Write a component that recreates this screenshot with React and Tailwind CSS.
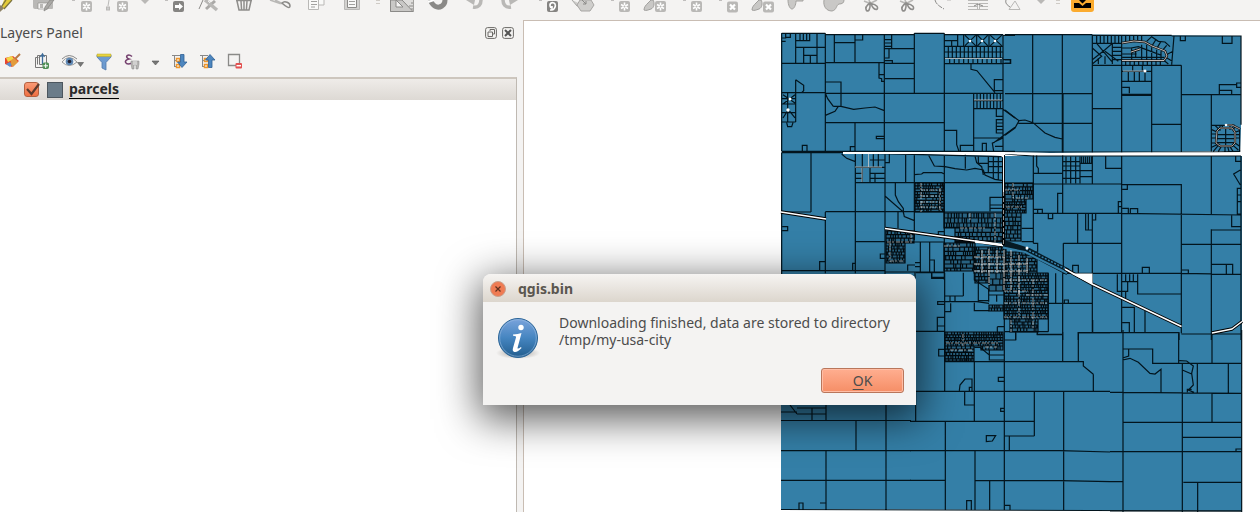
import React from "react";

/* ---------- main toolbar ---------- */

const GREY = "#b9b8b6";
const DARK = "#8b8a88";

function Star({ x = 19 }) {
  return (
    <g>
      <rect x={x} y="1" width="11" height="11" rx="2" fill={GREY} />
      <path d={`M${x + 5.5} 2.5v8M${x + 2} 4.5l7 4M${x + 9} 4.5l-7 4`} stroke="#fff" strokeWidth="1.6" />
      <circle cx={x + 5.5} cy="6.5" r="1" fill={GREY} />
    </g>
  );
}

function Cross() {
  return (
    <g>
      <rect x="19" y="1.5" width="11" height="11" rx="2" fill={GREY} />
      <path d="M22 4.500l5 5M27 4.500l-5 5" stroke="#fff" strokeWidth="2.2" />
    </g>
  );
}

const Leaf = () => <path d="M17 0c2 3 1 8-2 9-3 1-5 2-7 1 0-3 2-5 4-7l3-3z" fill="#c9c8c6" stroke="#a09f9d" />;

const Snips = () => (
  <g fill="none" stroke="#8f8e8c" strokeWidth="1.6">
    <path d="M12 1l6 2.500M19 3l6-3M18 3l-1-3" stroke={GREY} />
    <path d="M18 3c-3 2-5 5-3.500 7.500 2 1.500 4-1 3.500-7.500zM19 3.500c1 3 3 6 5.500 6 2.500-1.500.5-5-5.500-6z" />
  </g>
);

const groups = {
  edit: [
    ["Toggle editing", <g><path d="M12 0h8l-7 8-5 3z" fill="#e3cb38" /><path d="M14 0l-6 9M20 0l-8 9" stroke="#7d7440" strokeWidth="1.300" /><path d="M8 5v7l4-4z" fill="#8c816a" /></g>],
    ["Save layer edits", <g><path d="M5 0h20v8q0 1-1 1H7q-2 0-2-2z" fill={GREY} /><path d="M10 3h10v6H10z" fill="#f4f3f2" stroke={DARK} strokeWidth=".6" /><path d="M12 4h3v4h-3z" fill={GREY} /><path d="M26 0l-7 9-3 2 1-4 5-7z" fill="#a9a8a5" stroke={DARK} strokeWidth=".8" /></g>],
    ["Add feature", <g><Star x={17} /><path d="M8 0h3" stroke={DARK} /></g>],
    ["Add circular string", <g><path d="M9 0l-1 6" stroke={GREY} /><rect x="6.500" y="7" width="3" height="3" fill="#ccc" stroke={GREY} /><Star x={17} /></g>],
  ],
  feature: [
    ["Move feature", <g><path d="M11 0h3" stroke={DARK} /><rect x="19" y="1" width="11" height="11" rx="2" fill="#858482" /><path d="M21 5h4V3l4 3.500-4 3.500V8h-4z" fill="#fff" /></g>],
    ["Node tool", <g><path d="M9 9l4-9" stroke={DARK} /><path d="M16 9L25 1" stroke="#aaa9a7" strokeWidth="3" /><path d="M15 0l12 10" stroke={GREY} strokeWidth="3.500" /><path d="M18 1l2 2" stroke="#eee" /></g>],
    ["Delete selected", <path d="M10 .5h16M11 1l2 9h10l2-9M15 1l.6 9M18 1v9M21 1l-.6 9" fill="none" stroke="#8f8e8c" strokeWidth="1.500" />],
    ["Cut features", <g fill="none" stroke={DARK}><path d="M8 0l10 3.500h3M13 0l6 3" stroke={GREY} strokeWidth="1.600" /><path d="M20 3c3-3 8 0 8 3s-4 1-8-3z" strokeWidth="1.500" /></g>],
    ["Copy features", <g fill="#f9f9f8" stroke={GREY}><path d="M15 0v5h11V0" /><path d="M10.500 0v9.500h10V0" /><path d="M13 1.500h6M13 4.500h6M13 7h4" stroke={DARK} strokeWidth=".8" /></g>],
    ["Paste features", <g fill="#f9f9f8" stroke={GREY}><path d="M10.500 0v9.500h15V0" fill="#d2d1cf" /><path d="M13.500 0v7.500h9V0" stroke={DARK} /><path d="M15 1.500h6M15 4.500h6" stroke={DARK} strokeWidth=".8" /></g>],
  ],
  advanced: [
    ["CAD tools", <g><path d="M6.500 0v11.500h23V0" fill="#dedddb" stroke="#a3a29f" /><path d="M6.500 0v11.500H29L18 0z" fill="#c9c8c6" stroke={DARK} /><path d="M12 0v7h7l-7-7z" fill="#f4f3f2" stroke={DARK} /><path d="M27 3h2M25 6h4M27 9h2" stroke={DARK} /></g>],
    ["Snapping", <g><path d="M10 0c3 6 7 9 12 6 3-2 3-4 3-6" fill="none" stroke="#8a8987" strokeWidth="5" /><path d="M8 2l6-2" stroke="#fff" strokeWidth="2" /></g>],
    ["Undo", <g><path d="M17 7c6 1 8-3 8-7" fill="none" stroke={GREY} strokeWidth="3.500" /><path d="M10 0h9l-1 5z" fill={GREY} /></g>],
    ["Redo", <g><path d="M19 7c-6 1-8-3-8-7" fill="none" stroke={GREY} strokeWidth="3.500" /><path d="M26 0h-9l1 5z" fill={GREY} /></g>],
    ["Rotate feature", <g><path d="M11 0h3" stroke={DARK} /><rect x="19" y="1" width="11" height="11" rx="2" fill="#858482" /><path d="M23 8c-3-5 2-7 4-4 1 2 0 4-2 6M24 6v4h-2" fill="none" stroke="#fff" strokeWidth="1.600" /></g>],
    ["Simplify feature", <g fill="#cfcecc" stroke="#a7a6a4"><path d="M8 0l5 6h8" /><path d="M16 0l-3 5 4 6h9l4-6-3-5z" /><path d="M18 0l4 4m0-3v3h-3" stroke={DARK} fill="none" /></g>],
    ["Add ring", <g><path d="M11 0h3" stroke={DARK} /><Star /></g>],
    ["Add part", <g><Leaf /><Star /></g>],
    ["Fill ring", <g><path d="M11 0h3" stroke={DARK} /><Star /></g>],
    ["Delete ring", <g><path d="M11 0h3" stroke={DARK} /><Cross /></g>],
    ["Delete part", <g><Leaf /><Cross /></g>],
    ["Reshape features", <path d="M8 0c0 5 2 9 4 9s4-4 4-8h4l3 0V0" fill="#c9c8c6" stroke="#a3a29f" />],
    ["Offset curve", <path d="M8 0c-1 6 2 11 8 11 5-1 4-6 7-7 3 0 5-1 5-4" fill="#c9c8c6" stroke="#a3a29f" />],
    ["Split features", <Snips />],
    ["Split parts", <Snips />],
    ["Merge features", <g fill="none" stroke={DARK}><path d="M11 0c1 4 4 6 9 9" strokeDasharray="5 1" /><path d="M23 0h4" stroke={GREY} /></g>],
    ["Merge attributes", <g fill="none" stroke={GREY}><path d="M8 .5h20M8 3.500h9M19 3.500h9M8 6.500h9M19 6.500h9M8 9.500h20M17.500 3v7M19.500 3v7" /><path d="M14 6l4-2 5 2" stroke={DARK} /></g>],
    ["Rotate point symbols", <g fill="none" stroke={GREY}><path d="M10 0c-1 3 1 5 4 7" stroke={DARK} /><path d="M19 1l-6 8.500h11z" /></g>],
  ],
};

function Tools({ items }) {
  return items.map(([label, art]) => (
    <button key={label} type="button" aria-label={label} className="w-9 shrink-0">
      <svg viewBox="0 0 36 20" className="block h-5 w-9">{art}</svg>
    </button>
  ));
}

const MoreButton = ({ label }) => (
  <button type="button" aria-label={label} className="w-[18px] shrink-0">
    <svg viewBox="0 0 18 20" className="block h-5 w-full"><path d="M5 0h8l-4 4z" fill={GREY} /></svg>
  </button>
);

const Grip = () => (
  <svg viewBox="0 0 14 20" className="block h-5 w-3.5 shrink-0"><path d="M6 .5h4M6 3.500h4" stroke="#cfcbc6" /></svg>
);

function Toolbar() {
  return (
    <header className="-ml-2 flex h-5 shrink-0 overflow-hidden">
      <Tools items={groups.edit} />
      <MoreButton label="More digitizing tools" />
      <Tools items={groups.feature} />
      <Grip />
      <Tools items={groups.advanced} />
      <MoreButton label="More advanced tools" />
      <Grip />
      <button type="button" aria-label="Download data" className="w-9 shrink-0">
        <svg viewBox="0 0 36 20" className="block h-5 w-9">
          <path d="M7 0h23v9q0 3-3 3H10q-3 0-3-3z" fill="#fbab2f" />
          <path d="M10 3h5l3.500 3L22 3h5v5H10zM15 0h7l-3.500 3.500z" fill="#000" />
        </svg>
      </button>
    </header>
  );
}

/* ---------- layers panel ---------- */

const panelTools = [
  ["Style", "w-[34px]", <g><path d="M5 6l8-2 6 5-7 6-7-3z" fill="#e8462f" /><path d="M6 6l6-2 2 3-6 3z" fill="#f2d648" /><path d="M6 12l4-2 2 3-2 2z" fill="#5a8fd0" /><path d="M11 8l4-2 3 4-5 5q-3-3-2-7z" fill="#e39b3c" /><path d="M15 7l5-5" stroke="#b97a45" strokeWidth="2" /></g>],
  ["Add group", "w-[26px]", <g fill="none" stroke="#777"><path d="M4.500 5.500h-3v10h9M8 3.500H3.500v9" /><path d="M5.500 3.500h7v9h-7z" fill="#f4f3f2" /><path d="M8.500 12V3m-2 2l2-3 2 3" stroke="#3c6b99" strokeWidth="1.300" /><rect x="9" y="11" width="5.500" height="5.500" rx="1" fill="#4f8f55" stroke="#4f8f55" /><path d="M11.700 11.500v4.500m-2.200-2.200h4.500" stroke="#fff" /></g>],
  ["Visibility", "w-[35px]", <g><path d="M2 10q7-9 15 0-8 7-15 0z" fill="#f7f7f7" stroke="#999" /><circle cx="9.500" cy="9.500" r="3.800" fill="#5f88b4" /><circle cx="9.500" cy="9.500" r="1.800" fill="#223" /><path d="M2 7q7-7 15 0" fill="none" stroke="#888" /><path d="M17.500 10.500h6L20.500 14.500z" fill="#777" stroke="#555" strokeWidth=".6" /></g>],
  ["Filter", "w-[28px]", <g><path d="M2 3h14v2l-5 5.500V18l-4-2v-5.500L2 5z" fill="#6d9bd0" stroke="#5079ab" strokeWidth=".8" /><path d="M2 2h14v2.500H2z" fill="#e8d43f" stroke="#b8a528" strokeWidth=".5" /></g>],
  ["Filter by expression", "w-[24px]", <g><path d="M9 4.500C5 1 1 5 6 7c-6 1-4 7 3 4" fill="none" stroke="#75416f" strokeWidth="1.600" /><path d="M8 9h8v3l-1 5h-2v-4h-2v4H9l-1-5z" fill="#b5b4b2" stroke="#888" strokeWidth=".5" /><path d="M11 9v4M13 9v4" stroke="#eee" /></g>],
  ["Expression options", "w-[24px]", <path d="M5 9h7l-3.500 4z" fill="#777" stroke="#555" strokeWidth=".6" />],
  ["Expand all", "w-[28px]", <g fill="none"><path d="M1 3.500h8M3.500 3v12M3 8.500h3M3 14.500h3" stroke="#888" /><rect x="5.500" y="6.500" width="3" height="3" stroke="#ee962c" strokeWidth="1.500" /><rect x="5.500" y="12.500" width="3" height="3" stroke="#ee962c" strokeWidth="1.500" /><path d="M9.500 2.500h3.500V10h3l-5 5.500-4.500-5.500h3z" fill="#4d86bf" stroke="#2f5f94" strokeWidth=".8" /></g>],
  ["Collapse all", "w-[27px]", <g fill="none"><path d="M1 3.500h8M3.500 3v12M3 8.500h3M3 14.500h3" stroke="#888" /><rect x="5.500" y="6.500" width="3" height="3" stroke="#ee962c" strokeWidth="1.500" /><rect x="5.500" y="12.500" width="3" height="3" stroke="#ee962c" strokeWidth="1.500" /><path d="M9.500 15.500h3.500V8h3l-5-5.500L6.500 8h3z" fill="#4d86bf" stroke="#2f5f94" strokeWidth=".8" /></g>],
  ["Remove layer", "w-[28px]", <g><path d="M2.500 2.500h11v11h-11z" fill="none" stroke="#8a8a88" strokeWidth="1.300" /><rect x="9.500" y="11" width="6.500" height="5.500" rx="1" fill="#e25050" /><path d="M10.500 13.700h4.500" stroke="#fff" strokeWidth="1.500" /></g>],
];

function LayersPanel() {
  return (
    <section className="flex w-[517px] shrink-0 flex-col">
      <div className="flex h-6 items-center pt-0.5">
        <h2 className="flex-1 text-sm">Layers Panel</h2>
        <div className="flex gap-[5px] pr-[3px]">
          <button type="button" aria-label="Float panel">
            <svg viewBox="0 0 12 12" className="block size-3" fill="none" stroke="#6b6966">
              <rect x=".6" y=".6" width="10.800" height="10.800" rx="2" /><path d="M5 2.500h4.500V7H8M5 4V2.500" /><path d="M3 5h4.500v4.500H3z" />
            </svg>
          </button>
          <button type="button" aria-label="Close panel">
            <svg viewBox="0 0 12 12" className="block size-3" fill="none" stroke="#6b6966">
              <rect x=".6" y=".6" width="10.800" height="10.800" rx="2" /><path d="M3 3l6 6M9 3L3 9" stroke="#555" strokeWidth="2" />
            </svg>
          </button>
        </div>
      </div>
      <div className="flex h-[33px] items-center pt-0.5">
        {panelTools.map(([label, width, art]) => (
          <button key={label} type="button" aria-label={label} className={`${width} shrink-0`}>
            <svg viewBox="0 0 28 20" className="block h-5 w-7">{art}</svg>
          </button>
        ))}
      </div>
      <div className="flex-1 border-t-2 border-r border-t-[#cdc6be] border-r-[#bfb9b2] bg-white">
        <ul>
          <li className="flex h-[21px] items-center bg-linear-to-b from-[#efece9] to-[#ddd9d4] pl-6">
            <input
              id="layer-parcels"
              type="checkbox"
              defaultChecked
              className="peer size-[15px] appearance-none rounded-[3px] border border-[#b5603f] bg-linear-to-b from-[#f99a75] to-[#ef6f41]"
            />
            <svg viewBox="0 0 17 16" className="pointer-events-none invisible -ml-[15px] h-4 w-[17px] peer-checked:visible">
              <path d="M3 7l4.500 5L15 2" fill="none" stroke="#5d3a2c" strokeWidth="2.200" />
            </svg>
            <span className="ml-1.5 size-4 border border-[#4c565e] bg-[#6b7c89]" />
            <label htmlFor="layer-parcels" className="ml-1.5 border-b border-black text-sm leading-[18px] font-bold text-[#2a2a2a]">
              parcels
            </label>
          </li>
        </ul>
      </div>
    </section>
  );
}

/* ---------- parcel map ---------- */

const vTicks = (x0, x1, step, y0, y1) => {
  let d = "";
  for (let x = x0; x <= x1; x += step) d += `M${x} ${y0}V${y1}`;
  return d;
};

/* Small lots: rows of narrow plots, with widths that vary a little. */
function lots(x, y, w, h, rowH, lotW, seed) {
  let s = seed;
  const rnd = () => (s = (s * 16807) % 2147483647) / 2147483647;
  for (let i = 0; i < 4; i++) rnd();
  let d = `M${x} ${y}h${w}v${h}h${-w}z`;
  for (let ry = y; ry < y + h - 1; ry += rowH) {
    const rh = Math.min(rowH, y + h - ry);
    d += `M${x} ${ry.toFixed(1)}h${w}`;
    for (let rx = x + lotW * (0.5 + rnd()); rx < x + w - 1; rx += lotW * (0.6 + rnd() * 0.9)) {
      if (rnd() > 0.12) d += `M${rx.toFixed(1)} ${ry.toFixed(1)}v${rh.toFixed(1)}`;
    }
  }
  return d;
}

const tiles = [
  {
    at: "translate(775 28) scale(.33333)",
    d:
      "M20 16H151M151 20H418M418 16H508M508 20H684M684 22H720M20 16V370M20 370H720M151 16V370M328 20V370M418 16V195M508 16V370M684 22V370" +
      "M20 106H151M151 104H328M328 62H418M328 106H418M330 152H418M328 196H684M20 194H151M151 196H328M508 107H684" +
      "M62 16V104M62 38H104V16M62 58H151M126 16V104M86 58V104M86 82H126M106 82V104M20 30H32V16M20 40H32M32 28H46V16M75 16V38M85 16V38M95 16V38" +
      "M178 20V104M178 44H240M240 20V104M240 36H263V20M312 106V150L320 152V160H328M312 140H328M330 35H350M330 45H350M330 55H350M350 20V62M330 90H342V62M330 98H352V106" +
      "M62 155L86 172V188L80 194M62 155V282M20 282H62M35 284L38 296H50L54 284M20 212H62M20 228H62M38 196V282M20 254H62M24 200L60 225M60 200L24 228M40 245L60 270M40 245L24 270" +
      "M151 162H198V235M151 196L158 212L175 235M151 262L180 250L190 235M175 235H198L236 244L270 240L300 237L328 248M151 284H328M240 284V370M328 325H304V332H328M226 370V356H240M82 370V352H96V370M328 284H508" +
      "M588 107V124L606 128L660 194M684 155H658V188H684M684 95H706V106H684M596 196V370M596 242H684M596 218H684M508 307H545V350L552 370M556 370V352H596M596 330H684M664 242V265H684M684 275H664V315H684M664 285H684M664 295H684M664 305H684M684 330L652 345L656 370M684 244L720 270M720 298L655 345M660 355H684M622 370V346H634V370" +
      "M548 20V53M508 38H548M530 38V53M566 20V53M605 20V53M642 20V53M570 22L602 53M602 22L570 53M608 22L638 53M638 22L608 53M646 22L680 53M680 22L646 53M508 55H684M508 90H684M508 72H684" +
      vTicks(520, 680, 12, 55, 90) + vTicks(524, 680, 14, 93, 107) + vTicks(606, 680, 10, 196, 242),
  },
  {
    at: "translate(1005 28) scale(.33333)",
    d:
      "M0 20H262M262 22H500M500 24H708V290M704 300V370M0 372H620L706 370M83 20V286M172 20V374M174 197V374M262 20V374M350 22V374M440 112V374M529 112V372M619 202V370M0 95H17V106H0M0 197H262M172 286H262M262 112H529M262 242H350M350 199H440M350 202H440M440 289H529M529 200H708M500 110L507 24" +
      "M40 286H172M0 246L42 278L60 276L84 284L120 315L150 328L172 333M42 278L30 300L0 322M526 24V38H541V24M652 24V46H681V24M643 200V170H695M643 187H680V200M695 165H708V178H695Z" +
      "M350 130H440M350 160H440M352 178H373V196M383 112V130M412 112V130M370 130V160M388 130V160M403 130V160M420 130V160" +
      "M262 46H350M262 60L290 85L262 108M275 46L320 100M262 95L300 65L322 46M300 70L340 100M322 46V108M300 85V108M322 58H350M322 70H350M322 82H350M322 95H350M280 90V108" +
      "M352 60H378L400 56L470 82M380 60V98M352 78H395M352 88H478M410 50V98M425 50V98M440 58V98M455 65V98M468 70V98M425 40L440 26L460 40L480 42L495 56M440 55L452 36M455 62L468 40M470 70L485 52M484 80L504 70M486 90L502 100M478 98L490 108M392 62V90" +
      "M620 292H690M620 305L636 312M620 330H634M620 345H634M625 370L640 352M690 330H704M690 345L704 355M675 356L684 370M660 356V370M645 292V308M662 300V356M675 292V306M636 320H690M636 332H690M636 344H690M636 308L645 300H680L690 312V345L680 356H645L634 345Z" +
      "M630 292L642 304M652 292V300M690 296L684 306M692 312L704 308M692 320H704M620 318H634M620 358L636 350M640 370L648 357M668 356L672 370M684 352L700 366" +
      vTicks(275, 348, 11, 22, 46) + vTicks(362, 420, 12, 22, 42) + vTicks(362, 475, 13, 98, 110),
  },
  {
    at: "translate(775 150) scale(.33333)",
    d:
      "M20 8V390M20 8H200L684 20M108 8V186M241 12V370M151 186V370M330 12V390M392 14V98M418 14V270M508 14V390M20 186H108M151 185H508M241 98H684M20 362H330M241 275H330M508 186H684" +
      "M200 12L215 25L241 35M241 52H328M241 70H262M262 52V98M285 52V98M285 70H328M285 85H328M300 70V98M295 12V52M310 12V52M285 30H328M262 12V52M241 85H262M330 38H343V10" +
      "M460 14L478 48L510 50L540 56L575 60L600 55L625 60L630 75L660 88L684 92M418 74L440 72L445 68H500L508 72M571 14V56M600 18L605 38L620 50L625 75M640 20V70M655 20V85M670 20V90M640 35H684M640 50H684M625 68H684M610 20V40H640" +
      "M330 138L385 186L388 200L418 212M361 98V135L370 155L385 175V190M369 186V235M22 230H38V242H22M134 362V335H151M233 362V340H241M645 184V142H684M645 165H684M645 175H684" +
      "M418 276H508M436 276V365M464 276V365M464 330H478V365M420 345H398V362M420 338H436M420 350H436M330 312H316V325H330M330 366H508M470 365V385H508M508 232H684M490 255V245H508M420 365V390",
  },
  {
    at: "translate(1005 150) scale(.33333)",
    d:
      "M708 18V570M0 12L85 18H708M85 16V280M173 16V192M262 18V102M350 18V550M529 104V550M619 18V192M619 238V570M175 280V370M262 192V548M85 70H173M95 16V48L100 55V68M0 100H85M85 102H350M350 104H529V192M85 190H350L708 195M175 280H350M529 283H708M175 370H529L708 373M619 240H708M619 343H683V373M664 343V373M680 195V230H708M302 18V55H350M412 370V352H433V370M531 360H550V371M203 368V346H220V368" +
      "M350 155H340V190M340 170H350M352 175H370V190M376 190V176H398V190M352 118H367V104M158 190V130H173M85 178H112V190M98 178V190M130 192V206H143V192M218 192V280M242 192V240H262M250 192V240M262 210H272V192M706 60L686 72L706 105M692 18V34H708M708 115H697V192H708M697 135H708M697 155H708M85 280H98V305M50 235H85M50 275H85" +
      "M337 373V424H368V395M350 395H398M362 373V395M374 373V395M385 373V395M398 373V432H529M352 424H362V445M130 370V545M152 370V460M130 460H262M173 370V570M178 460V450H190V460M352 472H388V548M420 482V548M352 518H373V548M220 570V548H522V570M529 552H708M97 545V553H173M0 545H130M32 545V570" +
      "M183 20V100M197 20V100M212 20V100M225 20V100M173 35H225M173 48H225M173 62H262M173 85H225M225 40H262M225 80H262" + vTicks(230, 260, 6, 20, 38),
  },
  {
    at: "translate(910 260) scale(.33333)",
    d:
      "M18 38H104M104 38V395M17 396V484M106 484V750M193 305V484M195 574V750M283 38V750M239 662V750M373 396V528M461 396V750M458 216V305M548 180V216M505 305V218H600M550 343V396M18 214H104M104 305H520V318L550 343M0 394H600M0 484H373M283 528H373M0 572H450L600 576M0 661H106M195 662H450L600 665" +
      "M160 38V108M104 108H160M104 125H200L237 130M104 155H122V130M120 108V125M135 108V125M193 128V152H237M104 125H83V133H104M104 172H82V214M82 198H104M104 268H86V288H104M148 392L150 375L165 357H186V392M178 392V382H186M164 396V435H193M283 352H265V364H283M283 445H272V454H283M229 527H257L247 543L229 545ZM298 528V572M170 750V722H184V750M285 736H300V750M283 240H317V218M382 218V224H458" +
      "M65 38V52H104M193 38V60L236 88V125M205 70V125M205 122H236M237 75H283M237 105H283M260 105V125M238 270V300H283M238 285H283M193 262H210L238 285M262 200V216M262 200H283",
  },
  {
    at: "translate(1050 330) scale(.33333)",
    d:
      "M575 0V546M180 543H575M218 57H308V100H575M236 57V78L218 84M218 90L240 85L265 97L300 130L315 132L333 118V187M180 187H218L575 190M386 10V100M486 12V100M397 100V546M388 92L410 93L430 108L425 130L430 165L415 180L432 187M397 120L425 132M412 187V178H425M442 102V190M535 102V190M486 190V277M220 277H575M397 322H575M575 357H558V366M180 365H575M180 455H218M400 457H575M443 457V546M219 0V546",
  },
];

const dense = [
  lots(915, 183, 29, 29, 2.9, 2.4, 7),
  lots(944, 213, 59, 15, 5, 3, 11),
  lots(955, 228, 48, 14, 4.3, 3.4, 13),
  lots(944, 243, 31, 28, 4.2, 3.2, 17),
  lots(886, 231, 28, 12, 3.6, 2.6, 19),
  lots(886, 243, 19, 20, 3, 2.4, 23),
  lots(974, 247, 32, 26, 3.2, 2.5, 29),
  lots(1005, 183, 28, 16, 3.8, 2.8, 31),
  lots(1005, 199, 21, 14, 2.8, 2.4, 37),
  lots(1003, 213, 18, 28, 4.2, 3.2, 41),
  lots(1005, 252, 32, 21, 3.2, 2.8, 43),
  lots(1004, 273, 44, 46, 2.9, 2.3, 47),
  lots(1010, 319, 28, 13, 3, 2.5, 53),
  lots(945, 332, 58, 14, 2.8, 2.3, 59),
  lots(945, 346, 29, 15, 3.2, 2.6, 61),
  lots(975, 273, 13, 10, 3.6, 3, 67),
  lots(989, 305, 14, 6, 3, 2.6, 71),
  lots(989, 273, 14, 18, 6, 5, 73),
  lots(981, 346, 22, 4, 4, 2.6, 79),
];

const streets =
  "M921 183V212M921 190H940M921 196H940M921 202H940M921 207H940M940 188V210" +
  "M887 242H912M890 243V262M890 261H903M911 234V243M1005 190H1020M1013 183V198H1028M1006 207H1022" +
  "M1004 280H1048M1004 291H1028M1026 295H1048M1004 303H1048M1004 317H1048M1011 320V332M1033 303V330M1019 290V317M1033 280V303" +
  "M946 343H1000M950 350H972M963 334V346M985 347H997M970 213V220M960 228H985M995 213V245M944 246H960";

const mainStreets = "M974 257H1005M974 264H1028M974 271H1028M982 250V273M989 249V285M997 250V273M1004 250V290M1011 250V290M1019 255V295M1027 258V273";

const railway = "M781 212L826 219M885 228.500L975 241L1003 245.500M1065 269L1092 284L1181.500 326.500M1212 333L1232 329L1242 321.500";

function ParcelMap() {
  return (
    <svg viewBox="775 21 485 491" role="img" aria-label="Parcel map" className="h-[491px] w-[485px] shrink-0">
      <path d="M781 33H825V34.500H914V33H944V34.500H1003V35L1091 34.500L1241 36V128L1240 151L1050 153L1003 152L781 151Z" fill="#347fa7" />
      <path d="M781 152.500L843 153L1003 156H1242V511L781 509Z" fill="#347fa7" />
      {tiles.map((t) => (
        <g key={t.at} transform={t.at}>
          <path d={t.d} fill="none" stroke="#02141d" strokeWidth="3.600" />
        </g>
      ))}
      <path d={dense.join("")} fill="#020b10" fillOpacity=".25" stroke="#020b10" strokeWidth="1.200" />
      <g fill="none" stroke="#f2ece8">
        <path d={streets} strokeWidth=".8" strokeDasharray="4 1 2 2" opacity=".75" />
        <path d={mainStreets} strokeWidth=".9" strokeDasharray="6 1" opacity=".9" />
      </g>
      <g fill="none" strokeLinejoin="round">
        <path d="M1003 243L1028 251L1068 272" stroke="#061a24" strokeWidth="6.500" />
        <path d="M1003 247.500L1025 252L1067 273" stroke="#347fa7" strokeWidth="2" />
        <path d="M1026 249L1066 269" stroke="#347fa7" strokeWidth="1.500" strokeDasharray="2 1.500" />
        <path d={railway} stroke="#000" strokeWidth="3.400" />
        <path d={railway} stroke="#fff" strokeWidth="1.500" />
        <path d="M975 241.500L1003 245" stroke="#fff" strokeWidth="2.500" />
        <path d="M843 153L1000 153L1050 154L1150 153.500L1243 153.500" stroke="#fff" strokeWidth="2.200" />
        <path d="M1003.500 155V245" stroke="#000" strokeWidth="2.800" />
        <path d="M1003.500 153V192" stroke="#eee" strokeWidth="1" />
        <path d="M1003.500 192V245" stroke="#bbb" strokeWidth=".8" strokeDasharray="4 2" />
        <path d="M868.500 154V167M855 167H882M862 168V182M945 58.500H1002M1123 71H1145M974 100H1002" stroke="#ccc" strokeWidth=".8" />
        <path d="M1122 43L1134 41L1145 42L1152 46L1165 51L1167 56L1164 60.500H1122M1131 52L1140 49" stroke="#111" strokeWidth="2.400" />
        <path d="M1122 43L1134 41L1145 42L1152 46L1165 51L1167 56L1164 60.500H1122M1131 52L1140 49" stroke="#d5cbc6" strokeWidth=".9" />
        <path d="M1217 131L1220 128H1232L1235 132V143L1232 146H1220L1216 143ZM1226 125L1232 125L1240 129" stroke="#111" strokeWidth="2.200" />
        <path d="M1217 131L1220 128H1232L1235 132V143L1232 146H1220L1216 143ZM1226 125L1232 125L1240 129" stroke="#cfc8c4" strokeWidth=".8" />
      </g>
      <path d="M1071 273.500H1092.500V284.500ZM996 153H1004V159Q1002 155 996 155Z" fill="#fff" />
      <g fill="#fff">
        <circle cx="970" cy="41" r="1.300" /><circle cx="982" cy="41" r="1.300" /><circle cx="995" cy="41" r="1.300" />
        <circle cx="790" cy="99" r="1.500" /><circle cx="788" cy="110" r="1.700" /><circle cx="1145" cy="71" r="1.500" />
        <circle cx="1027" cy="248" r="1.500" /><circle cx="1226" cy="125" r="1.300" />
      </g>
      <path
        d="M781 420.500H911M781 450.700H911M781 480.300H911M826 405V420M826 450V510M856 420V451M886 405V510M790 405L797 414M797 408H826M781 412H797M797 414H826M812 408V420M781 509.500L1242 511M799 510V503H803V510M820 503H826"
        fill="none"
        stroke="#02141d"
        strokeWidth="1.200"
      />
    </svg>
  );
}

/* ---------- message dialog ---------- */

function MessageDialog() {
  return (
    <div
      role="dialog"
      aria-labelledby="dialog-title"
      className="absolute top-[274px] left-[483px] w-[433px] rounded-t-lg bg-[#f4f3f2] shadow-[0_10px_40px_4px_rgba(0,0,0,0.65)]"
    >
      <div className="flex h-7 items-center gap-3 rounded-t-lg bg-linear-to-b from-[#f6f4f2] to-[#dcd6cd] pt-px pl-[7px]">
        <button type="button" aria-label="Close">
          <svg viewBox="0 0 16 16" className="block size-4">
            <circle cx="8" cy="8" r="7.500" fill="#ef7b53" stroke="#c9a08d" />
            <path d="M5.500 5.500l5 5M10.500 5.500l-5 5" stroke="#5f2f1e" strokeWidth="1.200" />
          </svg>
        </button>
        <h1 id="dialog-title" className="text-sm font-bold text-[#5a564f]">qgis.bin</h1>
      </div>
      <div className="flex gap-4 px-3 pt-3">
        <svg viewBox="0 0 48 48" className="size-12 shrink-0">
          <defs>
            <linearGradient id="info" x1="0" y1="0" x2="0" y2="1">
              <stop offset="0" stopColor="#7ba4dc" />
              <stop offset=".5" stopColor="#4585c0" />
              <stop offset="1" stopColor="#225d8e" />
            </linearGradient>
            <radialGradient id="info-shade">
              <stop offset=".6" stopColor="#d3d0cd" />
              <stop offset="1" stopColor="#f4f3f2" />
            </radialGradient>
          </defs>
          <ellipse cx="23" cy="39" rx="22" ry="6" fill="url(#info-shade)" />
          <circle cx="23" cy="24" r="19.500" fill="url(#info)" stroke="#2b6597" />
          <circle cx="23" cy="24" r="18.300" fill="none" stroke="#9dbfe3" strokeWidth=".8" opacity=".7" />
          <circle cx="26" cy="13.500" r="2.700" fill="#fff" />
          <path d="M18 20.500q5-.5 8.500-1.500l-4 15q0 1.500 3.500-1l.5 1q-4 4.500-7 4-2.500-.5-1.500-4l3-10.500q.5-2-3-1.800z" fill="#fff" />
        </svg>
        <p className="text-sm leading-[17px]">
          Downloading finished, data are stored to directory
          <br />
          /tmp/my-usa-city
        </p>
      </div>
      <div className="flex justify-end px-3 pt-1.5 pb-3">
        <button
          type="button"
          className="h-[25px] w-[83px] rounded-[3px] border border-[#b9765b] bg-linear-to-b from-[#ffae90] to-[#f58e66] text-sm leading-[22px] shadow-[inset_0_0_0_1px_#ffbea6]"
        >
          <span className="underline underline-offset-3">O</span>K
        </button>
      </div>
    </div>
  );
}

export default function App() {
  return (
    <div className="relative flex h-screen flex-col overflow-hidden bg-[#f4f3f2] font-['Noto_Sans',sans-serif] text-[#4c4c4c]">
      <Toolbar />
      <div className="flex min-h-0 flex-1">
        <LayersPanel />
        <main className="ml-1.5 flex min-w-0 flex-1 justify-end overflow-hidden border-t border-l border-[#c9bdb3] bg-white">
          <ParcelMap />
        </main>
      </div>
      <MessageDialog />
    </div>
  );
}
